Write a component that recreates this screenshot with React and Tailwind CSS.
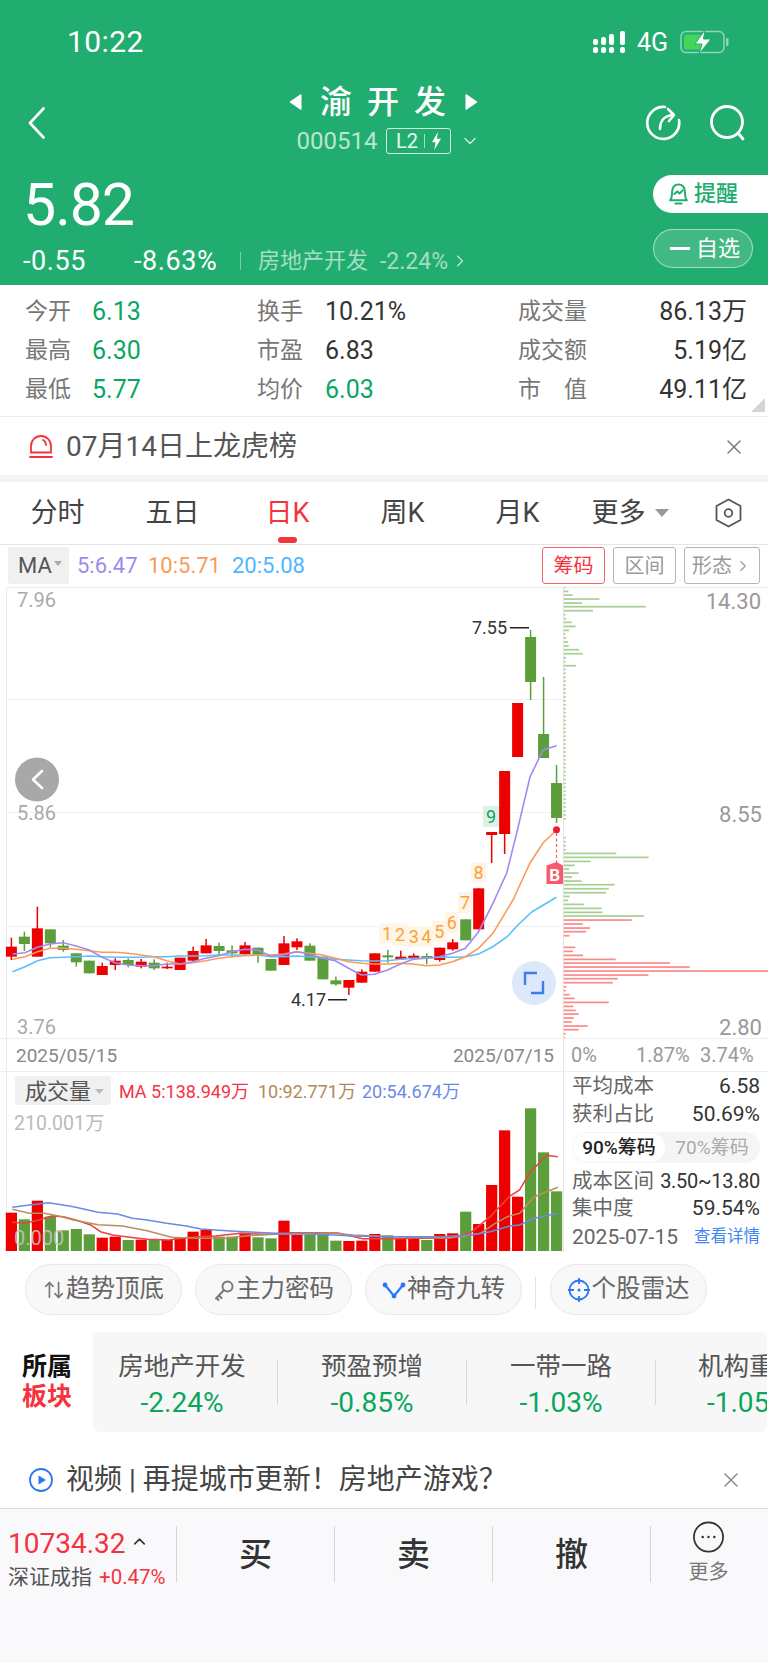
import React from "react";
import { ArrowUpDown, X, ChevronRight, ChevronDown, ChevronUp } from "lucide-react";

const RED = "#ee0000";
const GRN = "#5c9e3b";
// x index, color, wickTop, bodyTop, bodyBottom, wickBottom (zoom y values: page y = 840 + v/3)
const early = [
  ["r",293,320,350,360],["g",275,290,312,333],["r",200,265,350,350],["g",268,268,310,322],["g",300,317,330,335],
  ["g",340,340,367,380],["g",362,362,400,400],["r",368,378,405,405],["r",355,362,375,390],["g",355,360,375,382],
  ["r",357,365,380,385],["g",358,368,385,390],["r",368,380,385,387],["r",353,353,390,390],["r",320,333,362,365],
  ["r",297,316,340,340],["g",308,318,333,345],["g",316,331,340,352],["r",306,316,342,345],["g",323,323,345,368],
  ["g",357,357,392,392],["r",288,310,375,375],["r",295,304,322,330],["g",310,317,362,362],["g",350,350,418,418],
  ["g",410,421,433,437],["r",420,420,443,465],["r",388,395,428,428],["r",340,340,395,395],["g",330,346,352,368],
  ["r",332,350,358,360],["r",340,347,355,360],["g",340,348,353,373],["r",323,323,360,365],["r",297,307,328,332],
  ["g",238,238,301,301],["r",145,145,268,268],
];
const candles = [
  ...early.map((c) => [c[0], 840 + c[1] / 3, 840 + c[2] / 3, 840 + c[3] / 3, 840 + c[4] / 3]),
  ["r", 832, 832, 835, 863],
  ["r", 771, 771, 834, 854],
  ["r", 703, 703, 757, 757],
  ["g", 630, 637, 682, 700],
  ["g", 677, 734, 758, 758],
  ["g", 765, 783, 818, 823],
];
const cx = (i) => 11.4 + 12.98 * i;
const z4 = (pts) => pts.map(([x, y]) => `${(x / 2.8).toFixed(1)},${(840 + y / 3).toFixed(1)}`).join(" ");
const purple = z4([[35,342],[70,338],[105,322],[140,312],[177,308],[213,318],[250,330],[286,352],[322,368],[358,375],[395,377],[431,377],[467,372],[503,372],[540,365],[576,355],[612,347],[649,335],[685,328],[721,330],[758,348],[794,345],[830,335],[867,342],[903,355],[939,362],[976,385],[1012,405],[1048,403],[1085,390],[1121,372],[1157,358],[1194,355],[1230,350],[1267,340],[1303,325],[1340,275],[1380,190]]) + " 506.7,873 516.7,833 530,777 543,750 556.7,745.7";
const orange = z4([[35,358],[70,350],[105,335],[140,325],[177,325],[213,328],[250,332],[286,337],[322,337],[358,340],[395,345],[431,350],[467,362],[503,372],[540,368],[576,362],[612,355],[649,350],[685,347],[721,345],[758,345],[794,342],[830,335],[867,340],[903,345],[939,355],[976,365],[1012,370],[1048,372],[1085,372],[1121,370],[1157,372],[1194,377],[1230,375],[1267,365],[1303,350],[1340,325],[1380,280]]) + " 513,900 530,863 543,843 556.7,830";
const blue = z4([[35,395],[70,380],[105,362],[140,353],[177,352],[213,350],[250,348],[286,350],[322,352],[358,352],[395,352],[431,350],[467,350],[503,348],[540,348],[576,347],[612,345],[649,345],[685,345],[721,345],[758,350],[794,350],[830,348],[867,350],[903,353],[939,358],[976,360],[1012,362],[1048,363],[1085,362],[1121,358],[1157,355],[1194,355],[1230,352],[1267,352],[1303,350],[1340,342],[1380,320],[1420,290],[1450,255],[1490,215],[1530,190],[1558,172]]);

const tags = [
  ["1",1062,1105,250,310],["2",1100,1140,250,318],["3",1140,1178,258,320],["4",1175,1212,258,320],
  ["5",1210,1250,242,305],["6",1245,1285,216,280],["7",1282,1322,157,220],["8",1318,1362,67,127],
];

// chip distribution: zoom y (580 + v/3), length (v/3)
const topBars = [[22,5],[34,14],[45,27],[57,107],[69,55],[80,246],[92,88],[104,5],[116,8],[127,24],[139,36],[151,16],[162,5],[174,8],[186,13],[198,15],[209,46],[221,57],[233,7],[245,5],[257,37]];
const dotBars = [];
for (let y = 268; y <= 728; y += 11.8) dotBars.push([y, 6]);
const midBars = [[773,6],[785,6],[797,6],[809,6],[820,158],[832,255],[844,81],[856,33],[867,16],[879,45],[891,25],[903,54],[914,153],[926,135],[938,127],[949,18],[961,13],[973,61],[985,114],[997,116],[1008,241]];
const redBars = [[1020,204],[1032,57],[1044,79],[1055,67],[1067,17],[1102,35],[1114,28],[1126,58],[1138,156],[1149,319],[1161,378],[1173,613],[1185,254],[1196,162],[1208,147],[1220,8],[1232,6],[1244,18],[1255,33],[1267,135],[1279,29],[1291,36],[1302,45],[1314,30],[1326,24],[1338,72],[1349,45],[1361,6],[1373,4]];

const volTops = [488,508,452,500,541,537,553,563,560,570,569,567,570,561,545,540,560,560,548,562,565,512,555,555,555,572,573,572,552,556,567,560,570,552,550,485,522,405,241,440,175,307,424];
const z6 = (pts) => pts.map(([x, y]) => `${(x / 2.04).toFixed(1)},${(1050 + y / 3).toFixed(1)}`).join(" ");
const vRed = z6([[25,517],[50,520],[80,510],[105,498],[130,500],[160,512],[185,525],[205,545],[230,555],[265,562],[300,568],[345,570],[370,565],[400,560],[440,558],[490,550],[540,553],[590,548],[640,548],[690,549],[740,566],[800,566],[850,565],[920,565],[960,548],[1000,500],[1040,438],[1060,420],[1080,370],[1115,316],[1138,320]]);
const vBrown = z6([[25,478],[60,490],[90,490],[120,498],[150,510],[200,524],[250,528],[300,542],[350,562],[400,565],[460,565],[500,558],[560,553],[620,550],[680,550],[720,555],[800,560],[900,564],[940,560],[980,550],[1010,520],[1035,500],[1060,490],[1090,440],[1138,412]]);
const vBlue = z6([[25,472],[60,465],[100,458],[150,470],[200,487],[240,492],[270,505],[300,510],[340,520],[380,528],[410,537],[470,543],[540,548],[590,552],[650,553],[720,558],[800,560],[900,560],[960,555],[1000,545],[1040,528],[1060,525],[1090,505],[1138,490]]);

const Bolt = ({ className }) => (
  <svg viewBox="0 0 12 20" className={className} fill="currentColor"><path d="M7.5 0 1 11.5h4L3.5 20 11 7.5H6.5z" /></svg>
);

function StatusBar() {
  return (
    <div className="h-[84px] flex items-center justify-between pl-[67px] pr-[39px]">
      <span className="text-[30px] leading-none text-white tracking-[0.4px]">10:22</span>
      <div className="flex items-center">
        <svg width="33" height="23" viewBox="593 31 33 23" fill="#fff">
          <rect x="593" y="39" width="5" height="6" rx="2" /><rect x="593" y="47" width="5" height="6" rx="2" />
          <rect x="601" y="37" width="5" height="8" rx="2" /><rect x="601" y="47" width="5" height="6" rx="2" />
          <rect x="609" y="34" width="5" height="11" rx="2" /><rect x="609" y="47" width="5" height="6" rx="2" />
          <rect x="620" y="31" width="5" height="14" rx="2" /><rect x="620" y="47" width="5" height="6" rx="2" />
        </svg>
        <span className="ml-[11px] w-[33px] text-[25px] leading-none text-white">4G</span>
        <svg className="ml-[10px]" width="49" height="24" viewBox="0 0 49 24">
          <rect x="1" y="1.5" width="43" height="21" rx="5" fill="none" stroke="#fff" strokeOpacity=".5" strokeWidth="1.5" />
          <rect x="4" y="4.5" width="20" height="15" rx="2" fill="#44d65a" />
          <rect x="46" y="8" width="2.5" height="8" rx="1.2" fill="#fff" fillOpacity=".5" />
          <path d="M25 0 15 14h7l-3 10 12-15h-7.5z" fill="#fff" stroke="#21ad6f" strokeWidth="1" />
        </svg>
      </div>
    </div>
  );
}

function Header() {
  return (
    <div className="h-[285px] bg-[#21ad6f] flex flex-col text-white">
      <StatusBar />
      <div className="h-[76px] grid grid-cols-[1fr_auto_1fr] pl-[28px] pr-[21px]">
        <div className="flex items-center pt-[2px]">
          <svg width="17" height="32" viewBox="0 0 17 32" fill="none" stroke="#fff" strokeWidth="2.600" strokeLinecap="round" strokeLinejoin="round">
            <path d="M15.500 1.500 2 16l13.500 14.500" />
          </svg>
        </div>
        <div className="flex flex-col items-center">
          <div className="h-[36px] flex items-center mr-[8px]">
            <svg width="13" height="16" viewBox="0 0 13 16" fill="#fff"><path d="M12 .5v15L1 8z" strokeLinejoin="round" stroke="#fff" /></svg>
            <span className="ml-[18px] mr-[4px] text-[32px] leading-none font-medium tracking-[15px]">渝开发</span>
            <svg width="13" height="16" viewBox="0 0 13 16" fill="#fff"><path d="M1 .5v15L12 8z" strokeLinejoin="round" stroke="#fff" /></svg>
          </div>
          <div className="mt-[8px] flex items-center pl-[2px]">
            <span className="text-[24px] leading-none text-white/70">000514</span>
            <div className="ml-[9px] h-[26px] w-[65px] border border-white/80 rounded-[3px] flex items-center justify-center">
              <span className="text-[20px] leading-none text-white/90">L2</span>
              <span className="mx-[6px] w-px h-[14px] bg-white/60" />
              <Bolt className="w-[11px] h-[18px] text-white" />
            </div>
            <ChevronDown size={20} strokeWidth={1.6} className="ml-[9px] text-white/80" />
          </div>
        </div>
        <div className="flex items-center justify-end gap-[28px] pt-[1px]">
          <svg width="36" height="38" viewBox="0 0 36 38" fill="none" stroke="#fff" strokeWidth="2.6" strokeLinecap="round" strokeLinejoin="round">
            <path d="M20 3A16 16 0 1 0 34 16" />
            <path d="M15 25c0-9 4-13 13-14" /><path d="M23 5l6 6-5 6" />
          </svg>
          <svg width="38" height="38" viewBox="0 0 38 38" fill="none" stroke="#fff" strokeWidth="2.8" strokeLinecap="round">
            <circle cx="18" cy="18" r="15.5" /><path d="M29 29l5 6" />
          </svg>
        </div>
      </div>
      <div className="flex-1 flex justify-between">
        <div className="pl-[23px]">
          <div className="h-[88px] flex items-center">
            <span className="text-[59px] leading-none tracking-[-1px] font-normal pt-[1px]">5.82</span>
          </div>
          <div className="h-[26px] flex items-center text-[27px] leading-none">
            <span className="w-[111px] tracking-[0.6px]">-0.55</span>
            <span className="w-[106px] tracking-[0.6px]">-8.63%</span>
            <span className="w-px h-[18px] bg-white/40" />
            <span className="ml-[17px] text-[22px] text-white/60">房地产开发</span>
            <span className="ml-[12px] text-[23px] text-white/60">-2.24%</span>
            <ChevronRight size={20} strokeWidth={1.5} className="ml-[2px] text-white/70" />
          </div>
        </div>
        <div className="w-[115px] pt-[15px]">
          <div className="h-[38px] bg-white rounded-l-[19px] flex items-center pl-[14px] text-[#21ad6f]">
            <svg width="23" height="26" viewBox="0 0 22 24" fill="none" stroke="#21ad6f" strokeWidth="1.9" strokeLinejoin="round" strokeLinecap="round">
              <path d="M3 18c2-2 1.5-5 2-9 .5-4 3-6 6-6s5.500 2 6 6 0 7 2 9z" /><path d="M8 21h6" /><path d="M7 12l3-2.500 2 2 3-3" />
            </svg>
            <span className="ml-[4px] text-[22px] leading-none font-medium">提醒</span>
          </div>
          <div className="mt-[16px] h-[39px] w-[100px] bg-white/15 border border-white/50 rounded-[20px] flex items-center pl-[16px]">
            <span className="w-[20px] h-[3px] bg-white" />
            <span className="ml-[6px] text-[22px] leading-none">自选</span>
          </div>
        </div>
      </div>
    </div>
  );
}

const Stat = ({ l, v, c = "text-[#0aa65f]", w = "w-[67px]" }) => (
  <div className="h-[39px] flex items-center">
    <span className={`${w} text-[23px] leading-none text-[#777]`}>{l}</span>
    <span className={`text-[25px] leading-none ${c}`}>{v}</span>
  </div>
);
const StatR = ({ l, v }) => (
  <div className="h-[39px] flex items-center justify-between">
    {l}
    <span className="text-[25px] leading-none text-[#333]">{v}</span>
  </div>
);
const Lb = ({ children }) => <span className="text-[23px] leading-none text-[#777]">{children}</span>;

function Stats() {
  return (
    <div className="relative h-[132px] border-b border-[#ececec] pt-[7px] pl-[25px] pr-[21px] flex">
      <div className="w-[232px]">
        <Stat l="今开" v="6.13" /><Stat l="最高" v="6.30" /><Stat l="最低" v="5.77" />
      </div>
      <div className="w-[261px]">
        <Stat w="w-[68px]" l="换手" v="10.21%" c="text-[#333]" /><Stat w="w-[68px]" l="市盈" v="6.83" c="text-[#333]" /><Stat w="w-[68px]" l="均价" v="6.03" />
      </div>
      <div className="flex-1">
        <StatR l={<Lb>成交量</Lb>} v="86.13万" />
        <StatR l={<Lb>成交额</Lb>} v="5.19亿" />
        <StatR l={<span className="w-[69px] flex justify-between"><Lb>市</Lb><Lb>值</Lb></span>} v="49.11亿" />
      </div>
      <div className="absolute right-[3px] bottom-[4px] w-0 h-0 border-l-[14px] border-l-transparent border-b-[14px] border-b-[#d5d5d5]" />
    </div>
  );
}

function Alert() {
  return (
    <div className="h-[58px] flex items-center pl-[29px] pr-[22px] pt-[1px]">
      <svg width="24" height="24" viewBox="0 0 24 24" fill="none" stroke="#f5333f" strokeWidth="1.8" strokeLinecap="round">
        <path d="M2 17.500V11a10 10 0 0 1 20 0v6.500z" /><path d="M1 22h22" /><path d="M14 5c2 1 3 3 3 5" />
      </svg>
      <span className="ml-[13px] text-[28px] leading-none text-[#555]">07月14日上龙虎榜</span>
      <X size={24} strokeWidth={1.4} className="ml-auto text-[#777]" />
    </div>
  );
}

function Tabs() {
  const t = ["分时", "五日", "日K", "周K", "月K"];
  return (
    <div className="relative h-[63px] border-b border-[#e5e5e5] flex">
      {t.map((x, i) => (
        <div key={x} className={`w-[115px] flex items-center justify-center text-[27px] leading-none ${i === 2 ? "text-[#f5333f]" : "text-[#444]"}`}>{x}</div>
      ))}
      <div className="w-[110px] flex items-center justify-center text-[27px] leading-none text-[#444]">
        更多
        <span className="ml-[9px] w-0 h-0 border-x-[7px] border-x-transparent border-t-[8px] border-t-[#999]" />
      </div>
      <div className="flex-1 flex items-center pl-[30px]">
        <svg width="27" height="30" viewBox="0 0 27 30" fill="none" stroke="#555" strokeWidth="1.8" strokeLinejoin="round">
          <path d="M13.500 1.500 25.500 8v14l-12 6.500L1.500 22V8z" /><circle cx="13.500" cy="15" r="3.800" />
        </svg>
      </div>
      <div className="absolute left-[278px] bottom-[1px] w-[19px] h-[6px] rounded-full bg-[#f5333f]" />
    </div>
  );
}

const GBtn = ({ w, children }) => (
  <div className={`${w} h-[37px] border border-[#b5b5b5] rounded-[3px] flex items-center justify-center text-[20px] leading-none text-[#999]`}>{children}</div>
);

function MaRow() {
  return (
    <div className="h-[42px] flex items-start pt-[2px] pl-[8px] pr-[8px]">
      <div className="w-[61px] h-[37px] bg-[#f0f0f0] rounded-[3px] flex items-center pl-[10px] text-[#555]">
        <span className="text-[22px] leading-none">MA</span>
        <span className="ml-[2px] mb-[4px] w-0 h-0 border-x-[4px] border-x-transparent border-t-[5px] border-t-[#aaa]" />
      </div>
      <div className="h-[37px] flex items-center text-[22px] leading-none">
        <span className="ml-[8px] w-[71px] text-[#9d8af0]">5:6.47</span>
        <span className="w-[84px] text-[#fb9a58]">10:5.71</span>
        <span className="text-[#4fb6ff]">20:5.08</span>
      </div>
      <div className="ml-auto flex gap-[8px]">
        <div className="w-[63px] h-[37px] border border-[#f5636f] rounded-[3px] flex items-center justify-center text-[20px] leading-none text-[#f5333f]">筹码</div>
        <GBtn w="w-[63px]">区间</GBtn>
        <GBtn w="w-[76px]">形态<ChevronRight size={18} strokeWidth={1.5} className="ml-[2px]" /></GBtn>
      </div>
    </div>
  );
}

function MainChart() {
  const chip = (arr, color) =>
    arr.map(([y, l], i) => <rect key={i} x="563.7" y={580 + y / 3 - 0.8} width={Math.min(l / 3, 205)} height="1.700" fill={color} />);
  return (
    <svg width="768" height="451" viewBox="0 587 768 451" className="block [font-family:Roboto,'Noto_Sans_CJK_SC',sans-serif]">
      <rect x="6" y="587" width="762" height="1" fill="#ececec" />
      {[699, 812, 926].map((y) => <rect key={y} x="6" y={y} width="557" height="1" fill="#f0f0f0" />)}
      <rect x="6" y="587" width="1" height="451" fill="#ececec" />
      <rect x="563" y="587" width="1" height="451" fill="#e6e6e6" />
      {chip(topBars, "#a6cf94")}
      {chip(dotBars, "#a6cf94")}
      {chip(midBars, "#a6cf94")}
      {chip(redBars, "#fb8a8a")}
      {tags.map(([t, a, b, c, d]) => (
        <g key={t}>
          <rect x={a / 2.8} y={840 + c / 3} width={(b - a) / 2.8} height={(d - c) / 3} fill="#fff4e8" />
          <text x={(a + b) / 5.6} y={840 + (c + d) / 6 + 6.500} fontSize="18" textAnchor="middle" fill="#fba233">{t}</text>
        </g>
      ))}
      <rect x="483" y="806" width="16" height="21" fill="#dcf2e8" />
      <text x="491" y="823" fontSize="18" textAnchor="middle" fill="#0aa65f">9</text>
      {candles.map(([c, wt, bt, bb, wb], i) => {
        const col = c === "r" ? RED : GRN;
        const x = cx(i);
        return (
          <g key={i}>
            <rect x={x - 0.75} y={wt} width="1.500" height={wb - wt} fill={col} />
            <rect x={x - 5.5} y={bt} width="11" height={Math.max(bb - bt, 1.5)} fill={col} />
          </g>
        );
      })}
      <polyline points={blue} fill="none" stroke="#5ec0fb" strokeWidth="1.600" />
      <polyline points={orange} fill="none" stroke="#fb9a58" strokeWidth="1.600" />
      <polyline points={purple} fill="none" stroke="#a08cf0" strokeWidth="1.600" />
      <g fontSize="20" fill="#aaa">
        <text x="17" y="607">7.96</text><text x="17" y="820">5.86</text><text x="17" y="1034">3.76</text>
      </g>
      <g fontSize="22" fill="#999" textAnchor="end">
        <text x="761" y="609">14.30</text><text x="762" y="822">8.55</text><text x="762" y="1035">2.80</text>
      </g>
      <text x="472" y="634" fontSize="18" fill="#333">7.55</text>
      <rect x="510" y="627" width="19" height="1.500" fill="#222" />
      <text x="291" y="1006" fontSize="18" fill="#333">4.17</text>
      <rect x="328" y="999" width="19" height="1.500" fill="#222" />
      <circle cx="37" cy="779.500" r="22" fill="#a8a8a8" />
      <path d="M42 771l-9 8.500 9 8.500" fill="none" stroke="#fff" strokeWidth="2.600" strokeLinecap="round" strokeLinejoin="round" />
      <circle cx="534" cy="983" r="22" fill="#dde8fb" />
      <path d="M525 985v-12h12M543 981v12h-12" fill="none" stroke="#3a7ff0" strokeWidth="2.400" />
      <path d="M556.500 833V862" stroke="#f5566a" strokeWidth="1.200" strokeDasharray="3 2.500" />
      <circle cx="556.500" cy="829.700" r="3.500" fill="#ee1c2e" />
      <path d="M546.500 865.500l10-3.500 6.500 3.500v18.500h-16.500z" fill="#f9596c" />
      <text x="554.800" y="880.500" fontSize="17" fontWeight="700" textAnchor="middle" fill="#fff">B</text>
    </svg>
  );
}

function AxisRow() {
  return (
    <div className="h-[34px] border-y border-[#eeeeee] flex items-center text-[19px] leading-none text-[#888]">
      <div className="ml-[6px] w-[557px] h-full flex items-center justify-between pl-[9px] pr-[9px] border-l border-[#ececec]">
        <span>2025/05/15</span><span>2025/07/15</span>
      </div>
      <div className="flex-1 h-full flex items-center border-l border-[#e6e6e6] pl-[7px] text-[#999] text-[20px]">
        <span className="w-[65px]">0%</span><span className="w-[64px]">1.87%</span><span>3.74%</span>
      </div>
    </div>
  );
}

const InfoRow = ({ h, l, v, vc = "text-[21px]" }) => (
  <div className={`${h} flex items-center justify-between whitespace-nowrap`}>
    <span className="text-[20.500px] leading-none text-[#666]">{l}</span>
    <span className={`leading-none text-[#333] ${vc}`}>{v}</span>
  </div>
);

function Volume() {
  return (
    <div className="h-[180px] flex">
      <div className="w-[563px]">
        <svg width="563" height="180" viewBox="0 1072 563 180" className="block [font-family:Roboto,'Noto_Sans_CJK_SC',sans-serif]">
          <rect x="6" y="1072" width="1" height="180" fill="#ececec" />
          <rect x="15" y="1076" width="96" height="29" rx="3" fill="#f0f0f0" />
          <text x="25" y="1099" fontSize="22" fill="#555">成交量</text>
          <path d="M95 1089h9l-4.500 5z" fill="#bbb" />
          <text x="119" y="1098" fontSize="18" fill="#f5333f">MA 5:138.949万</text>
          <text x="258" y="1098" fontSize="18" fill="#b08a55">10:92.771万</text>
          <text x="362" y="1098" fontSize="18" fill="#6a8ae8">20:54.674万</text>
          <text x="14" y="1130" fontSize="19.500" fill="#bbb">210.001万</text>
          {volTops.map((t, i) => {
            const y = 1050 + t / 3;
            return <rect key={i} x={cx(i) - 5.600} y={y} width="11.200" height={1251 - y} fill={candles[i][0] === "r" ? RED : GRN} />;
          })}
          <polyline points={vRed} fill="none" stroke="#f04040" strokeWidth="1.500" />
          <polyline points={vBrown} fill="none" stroke="#b89060" strokeWidth="1.500" />
          <polyline points={vBlue} fill="none" stroke="#6a8ae8" strokeWidth="1.500" />
          <text x="14" y="1245" fontSize="20" fill="#c8c8c8" fillOpacity=".85">0.000</text>
        </svg>
      </div>
      <div className="flex-1 border-l border-[#e6e6e6] pl-[8px] pr-[8px]">
        <InfoRow h="h-[28px]" l="平均成本" v="6.58" />
        <InfoRow h="h-[28px]" l="获利占比" v="50.69%" />
        <div className="mt-[4px] h-[31px] bg-[#f5f5f5] rounded-full flex items-center p-[1px]">
          <div className="w-[92px] h-full bg-white rounded-full flex items-center justify-center text-[19px] leading-none text-[#222] font-medium">90%筹码</div>
          <div className="flex-1 flex items-center justify-center text-[19px] leading-none text-[#aaa]">70%筹码</div>
        </div>
        <div className="h-[4px]" />
        <InfoRow h="h-[28px]" l="成本区间" v="3.50~13.80" vc="text-[20px] tracking-[-0.3px]" />
        <InfoRow h="h-[26px]" l="集中度" v="59.54%" />
        <div className="mt-[2px] h-[28px] flex items-center justify-between whitespace-nowrap">
          <span className="text-[21px] leading-none text-[#666]">2025-07-15</span>
          <span className="text-[16.500px] leading-none text-[#3f84f2]">查看详情</span>
        </div>
      </div>
    </div>
  );
}

const Pill = ({ icon, children }) => (
  <div className="w-[157px] h-[51px] bg-[#f8f8f8] border border-[#e8e8e8] rounded-full flex items-center justify-center text-[24.500px] leading-none text-[#666]">
    {icon}
    <span>{children}</span>
  </div>
);

function Chips() {
  return (
    <div className="h-[80px] pt-[12px] pl-[25px] flex items-start">
      <Pill icon={<ArrowUpDown size={22} strokeWidth={1.8} className="text-[#777] mr-[1px]" />}>趋势顶底</Pill>
      <div className="w-[13px]" />
      <Pill icon={
        <svg className="mr-[1px]" width="22" height="22" viewBox="0 0 22 22" fill="none" stroke="#777" strokeWidth="1.900" strokeLinecap="round">
          <circle cx="14.500" cy="7.500" r="5" /><path d="M11 11 3 19.500M6 16.500l2.500 2.500M3.500 19l2 2" />
        </svg>
      }>主力密码</Pill>
      <div className="w-[13px]" />
      <Pill icon={
        <svg className="mr-[1px]" width="24" height="20" viewBox="0 0 24 20" fill="none" stroke="#2a78f0" strokeWidth="2.200">
          <path d="M3 5l9 11 9-11" /><circle cx="3" cy="5" r="2.400" fill="#2a78f0" stroke="none" /><circle cx="21" cy="5" r="2.400" fill="#2a78f0" stroke="none" /><circle cx="12" cy="16" r="2.400" fill="#2a78f0" stroke="none" />
        </svg>
      }>神奇九转</Pill>
      <div className="ml-[13px] mt-[13px] w-px h-[32px] bg-[#e2e2e2]" />
      <div className="w-[14px]" />
      <Pill icon={
        <svg className="mr-[2px]" width="22" height="24" viewBox="0 0 22 24" fill="none" stroke="#2a78f0" strokeWidth="1.800">
          <circle cx="11" cy="12" r="9.500" /><path d="M11 0v6M11 18v6M0 12h6M16 12h6" /><circle cx="11" cy="12" r="1.500" fill="#2a78f0" stroke="none" />
        </svg>
      }>个股雷达</Pill>
    </div>
  );
}

const Sector = ({ l, v, w }) => (
  <div className={`${w} shrink-0 flex flex-col items-center pt-[5px]`}>
    <span className="h-[36px] flex items-center text-[25.500px] leading-none text-[#555] whitespace-nowrap">{l}</span>
    <span className="h-[36px] flex items-center text-[28px] leading-none text-[#0aa65f] whitespace-nowrap">{v}</span>
  </div>
);
const Vd = () => <div className="shrink-0 w-px h-[45px] bg-[#d9d9d9]" />;

function Sectors() {
  return (
    <div className="h-[100px] flex">
      <div className="w-[93px] pl-[22px] flex flex-col justify-center text-[25px] leading-[30px] font-bold">
        <span className="text-[#111]">所属</span>
        <span className="text-[#f5333f]">板块</span>
      </div>
      <div className="flex-1 min-w-0 mr-px bg-[#f7f7f7] rounded-[6px] flex items-center overflow-hidden">
        <Sector w="w-[178px]" l="房地产开发" v="-2.24%" />
        <div className="w-[6px] shrink-0" /><Vd />
        <Sector w="w-[188px]" l="预盈预增" v="-0.85%" /><Vd />
        <Sector w="w-[188px]" l="一带一路" v="-1.03%" /><Vd />
        <div className="pl-[42px] shrink-0 flex flex-col items-start pt-[5px]">
          <span className="h-[36px] flex items-center text-[25.500px] leading-none text-[#555] whitespace-nowrap">机构重仓</span>
          <span className="pl-[9px] h-[36px] flex items-center text-[28px] leading-none text-[#0aa65f] whitespace-nowrap">-1.05%</span>
        </div>
      </div>
    </div>
  );
}

function Video() {
  return (
    <div className="h-[76px] flex items-center pt-[19px] pl-[29px] pr-[25px]">
      <svg width="24" height="24" viewBox="0 0 24 24" fill="none" stroke="#2a78f0" strokeWidth="1.800">
        <circle cx="12" cy="12" r="11" /><path d="M9.500 7.500 17 12l-7.500 4.500z" fill="#2a78f0" stroke="none" />
      </svg>
      <span className="ml-[13px] text-[28px] leading-none text-[#444] whitespace-nowrap">视频 | 再提城市更新！房地产游戏？</span>
      <X size={24} strokeWidth={1.4} className="ml-auto text-[#888]" />
    </div>
  );
}

const Action = ({ t }) => (
  <div className="w-[158px] flex items-center justify-center border-r border-[#d5d5d5] text-[33px] leading-none font-medium text-[#333] pt-[1px]">{t}</div>
);

function BottomBar() {
  return (
    <div className="h-[155px] bg-[#f9f9fb] border-t border-[#dedede] pt-[17px]">
      <div className="h-[56px] flex">
        <div className="w-[177px] border-r border-[#d5d5d5] pl-[8px]">
          <div className="h-[36px] flex items-center">
            <span className="text-[28px] leading-none text-[#f5333f]">10734.32</span>
            <ChevronUp size={19} strokeWidth={2} className="ml-[4px] mb-[5px] text-[#333]" />
          </div>
          <div className="h-[30px] flex items-center whitespace-nowrap">
            <span className="text-[21px] leading-none text-[#555]">深证成指</span>
            <span className="ml-[7px] text-[20.500px] leading-none text-[#f5333f]">+0.47%</span>
          </div>
        </div>
        <Action t="买" /><Action t="卖" /><Action t="撤" />
        <div className="flex-1 flex flex-col items-center -mt-[5px] pr-[2px]">
          <svg width="33" height="33" viewBox="0 0 33 33" fill="none" stroke="#333" strokeWidth="1.800">
            <circle cx="16.500" cy="16.500" r="15" />
            <circle cx="10.500" cy="16.500" r="1.300" fill="#333" stroke="none" /><circle cx="16.500" cy="16.500" r="1.300" fill="#333" stroke="none" /><circle cx="22.500" cy="16.500" r="1.300" fill="#333" stroke="none" />
          </svg>
          <span className="mt-[9px] text-[20px] leading-none text-[#777]">更多</span>
        </div>
      </div>
    </div>
  );
}

export default function App() {
  return (
    <div className="w-[768px] h-[1663px] overflow-hidden bg-white [font-family:Roboto,'Noto_Sans_CJK_SC',sans-serif]">
      <Header />
      <Stats />
      <Alert />
      <div className="h-[7px] bg-[#f3f4f6]" />
      <Tabs />
      <MaRow />
      <MainChart />
      <AxisRow />
      <Volume />
      <Chips />
      <Sectors />
      <Video />
      <BottomBar />
    </div>
  );
}
